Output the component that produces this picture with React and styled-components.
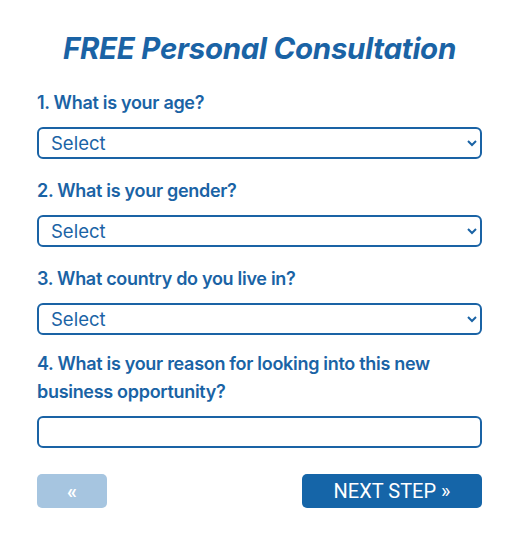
import React from 'react';
import styled, { createGlobalStyle } from 'styled-components';

const GlobalStyle = createGlobalStyle`
  body {
    margin: 0;
    background: #fff;
    font-family: Inter, "Open Sans", sans-serif;
  }
`;

const questions = [
  { id: 'age', label: '1. What is your age?', gap: 18 },
  { id: 'gender', label: '2. What is your gender?', gap: 18 },
  { id: 'country', label: '3. What country do you live in?', gap: 15 },
];

function App() {
  return (
    <>
      <GlobalStyle />
      <FormBlock>
        <Title>FREE Personal Consultation</Title>
        {questions.map((q) => (
          <Field key={q.id} $gap={q.gap}>
            <Label htmlFor={q.id}>{q.label}</Label>
            <Select id={q.id} defaultValue="">
              <option value="">Select</option>
            </Select>
          </Field>
        ))}
        <Field $gap={18}>
          <Label htmlFor="reason">
            4. What is your reason for looking into this new business opportunity?
          </Label>
          <TextInput id="reason" type="text" />
        </Field>
        <ButtonRow>
          <BackButton type="button">«</BackButton>
          <NextButton type="button">NEXT STEP »</NextButton>
        </ButtonRow>
      </FormBlock>
    </>
  );
}

const FormBlock = styled.div`
  display: flex;
  flex-direction: column;
  width: 445px;
  margin-left: 37px;
  padding-top: 28px;
`;

const Title = styled.h1`
  margin: 0 0 21px;
  font-size: 29.5px;
  line-height: 40px;
  font-weight: 700;
  font-style: italic;
  text-align: center;
  color: #1a63a5;
  letter-spacing: -0.3px;
`;

const Field = styled.div`
  display: flex;
  flex-direction: column;
  margin-bottom: ${(p) => p.$gap}px;
`;

const Label = styled.label`
  font-size: 18px;
  line-height: 28px;
  font-weight: 600;
  color: #1a63a5;
  margin-bottom: 10px;
  letter-spacing: -0.3px;
`;

const Select = styled.select`
  height: 32px;
  border: 2px solid #1a63a5;
  border-radius: 6px;
  padding: 0 8px;
  font-family: inherit;
  font-size: 18.5px;
  color: #1a63a5;
  background: #fff;
  outline: none;
`;

const TextInput = styled.input`
  height: 32px;
  box-sizing: border-box;
  border: 2px solid #1a63a5;
  border-radius: 6px;
  padding: 0 10px;
  font-family: inherit;
  font-size: 17px;
  color: #1a63a5;
  outline: none;
`;

const ButtonRow = styled.div`
  display: flex;
  justify-content: space-between;
  margin-top: 8px;
`;

const BaseButton = styled.button`
  height: 34px;
  border: none;
  border-radius: 5px;
  color: #fff;
  font-family: Roboto, sans-serif;
  font-size: 20px;
  cursor: pointer;
`;

const BackButton = styled(BaseButton)`
  width: 70px;
  background: #a6c5e0;
  font-weight: 700;
`;

const NextButton = styled(BaseButton)`
  width: 180px;
  background: #1565a8;
`;

export default App;
